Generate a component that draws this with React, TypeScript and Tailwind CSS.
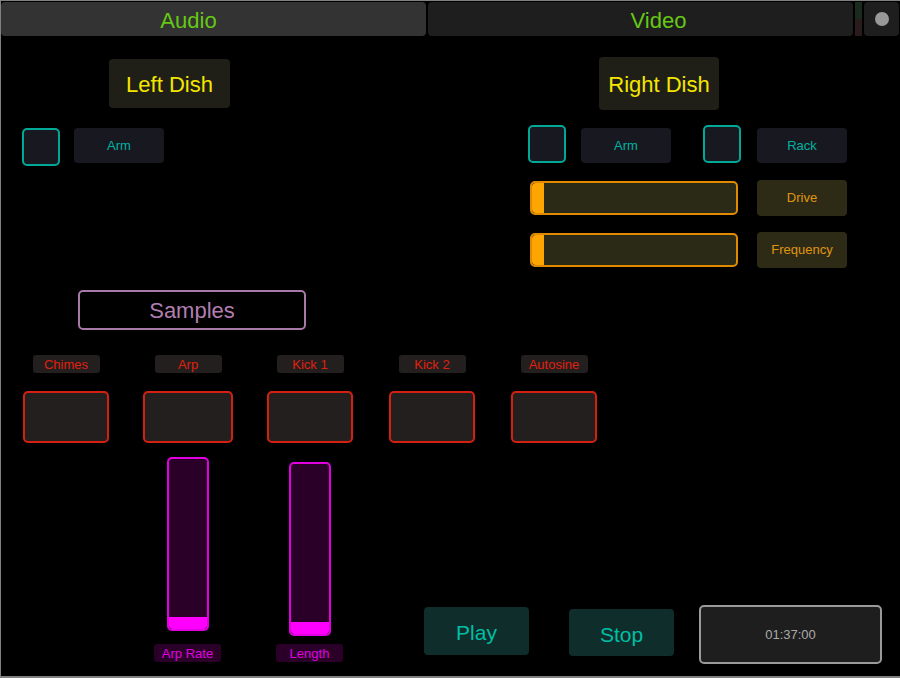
import React from 'react';

const font = { fontFamily: '"Liberation Sans", Arial, sans-serif' };

function Toggle({ className = '' }: { className?: string }) {
  return <div className={`w-[38px] h-[38px] rounded-[5px] border-2 border-[#00a898] bg-[#171820] ${className}`} />;
}

function TealLabel({ text, className = '' }: { text: string; className?: string }) {
  return (
    <div className={`w-[90px] h-[35px] rounded-[4px] bg-[#171820] text-[#00b3a0] text-[13px] flex items-center justify-center ${className}`}>
      {text}
    </div>
  );
}

function HSlider({ label }: { label: string }) {
  return (
    <div className="flex items-center">
      <div className="ml-[2px] w-[208px] h-[34px] rounded-[5px] border-2 border-[#e08a00] bg-[#2b2a17] flex">
        <div className="w-[12px] h-full rounded-l-[4px] bg-[#ffa500]" />
      </div>
      <div className="ml-[19px] w-[90px] h-[36px] rounded-[4px] bg-[#2d2b16] text-[#e0950f] text-[13px] flex items-center justify-center">
        {label}
      </div>
    </div>
  );
}

function Pad({ label, wide }: { label: string; wide?: boolean }) {
  return (
    <div className="w-[88px] flex flex-col items-center">
      <div className="w-[67px] h-[18px] pt-[2px] rounded-[3px] bg-[#231f1f] text-[#e0200f] text-[13px] flex items-center justify-center">
        {label}
      </div>
      <div className={`mt-[18px] ${wide ? 'w-[90px]' : 'w-[86px]'} h-[52px] rounded-[5px] border-2 border-[#d42010] bg-[#231f1f]`} />
    </div>
  );
}

function VSlider({ label, offset, labelGap }: { label: string; offset: string; labelGap: string }) {
  return (
    <div className="w-[67px] flex flex-col items-center">
      <div className={`${offset} w-[42px] h-[174px] rounded-[5px] border-2 border-[#e000e0] bg-[#2a0029] flex flex-col justify-end`}>
        <div className="h-[12px] rounded-b-[4px] bg-[#ff00ff]" />
      </div>
      <div className={`${labelGap} w-[67px] h-[18px] pt-[1px] rounded-[3px] bg-[#2a0029] text-[#e000e0] text-[13px] flex items-center justify-center`}>
        {label}
      </div>
    </div>
  );
}

export default function App() {
  return (
    <div style={font} className="w-[900px] h-[678px] bg-black border-l border-t border-b-2 border-[#808080] flex flex-col overflow-hidden">
      {/* Tab bar */}
      <div className="flex h-[35px] pt-[1px] gap-[2px]">
        <div className="w-[425px] h-[34px] pt-[3px] pr-[50px] rounded-[4px] bg-[#333333] text-[#66c814] text-[22px] flex items-center justify-center">
          Audio
        </div>
        <div className="w-[425px] h-[34px] pt-[3px] pl-[36px] rounded-[4px] bg-[#1e1e1e] text-[#66c814] text-[22px] flex items-center justify-center">
          Video
        </div>
        <div className="w-[7px] h-[34px] flex flex-col">
          <div className="flex-1 bg-[#1a2a1c]" />
          <div className="flex-1 bg-[#2a1c1c]" />
        </div>
        <div className="flex-1 h-[34px] mr-[1px] rounded-[4px] bg-[#1e1e1e] flex items-center justify-center">
          <div className="w-[14px] h-[14px] rounded-full bg-[#999999]" />
        </div>
      </div>

      {/* Dishes */}
      <div className="flex h-[254px]">
        <div className="w-[527px] flex flex-col">
          <div className="ml-[108px] mt-[23px] w-[121px] h-[49px] pt-[2px] rounded-[4px] bg-[#1f1f17] text-[#f5e600] text-[22px] flex items-center justify-center">
            Left Dish
          </div>
          <div className="mt-[20px] ml-[21px] flex items-start">
            <Toggle />
            <TealLabel text="Arm" className="ml-[14px]" />
          </div>
        </div>
        <div className="flex flex-col">
          <div className="ml-[71px] mt-[21px] w-[120px] h-[53px] pt-[2px] rounded-[4px] bg-[#1f1f17] text-[#f5e600] text-[22px] flex items-center justify-center">
            Right Dish
          </div>
          <div className="mt-[15px] flex items-start">
            <Toggle />
            <TealLabel text="Arm" className="ml-[15px] mt-[3px]" />
            <Toggle className="ml-[32px]" />
            <TealLabel text="Rack" className="ml-[16px] mt-[3px]" />
          </div>
          <div className="mt-[17px] flex flex-col gap-[16px]">
            <HSlider label="Drive" />
            <HSlider label="Frequency" />
          </div>
        </div>
      </div>

      {/* Samples */}
      <div className="ml-[77px] w-[228px] h-[40px] rounded-[5px] border-2 border-[#a878a8] text-[#b07fb0] text-[22px] flex items-center justify-center">
        Samples
      </div>

      <div className="mt-[25px] ml-[21px] flex gap-[34px]">
        <Pad label="Chimes" />
        <Pad label="Arp" wide />
        <Pad label="Kick 1" />
        <Pad label="Kick 2" />
        <Pad label="Autosine" />
      </div>

      {/* Bottom */}
      <div className="flex items-start">
        <div className="ml-[153px] mt-[14px]">
          <VSlider label="Arp Rate" offset="" labelGap="mt-[13px]" />
        </div>
        <div className="ml-[55px] mt-[14px]">
          <VSlider label="Length" offset="mt-[5px]" labelGap="mt-[8px]" />
        </div>
        <div className="ml-[81px] mt-[164px] w-[105px] h-[48px] pt-[4px] rounded-[4px] bg-[#0f2d2a] text-[#00bfa5] text-[21px] flex items-center justify-center">
          Play
        </div>
        <div className="ml-[40px] mt-[166px] w-[105px] h-[47px] pt-[4px] rounded-[4px] bg-[#0f2d2a] text-[#00bfa5] text-[21px] flex items-center justify-center">
          Stop
        </div>
        <div className="ml-[25px] mt-[162px] w-[183px] h-[59px] rounded-[5px] border-2 border-[#9a9a9a] bg-[#1e1e1e] text-[#aaaaaa] text-[13px] flex items-center justify-center">
          01:37:00
        </div>
      </div>
    </div>
  );
}
